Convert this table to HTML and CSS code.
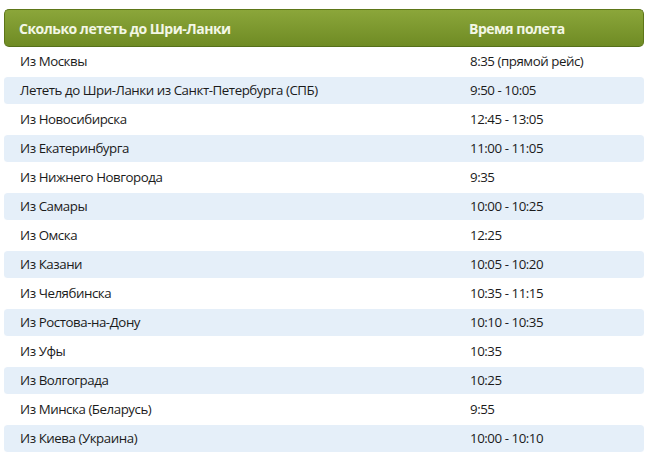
FILE: index.html
```
<!DOCTYPE html>
<html lang="ru">
<head>
<meta charset="utf-8">
<link rel="stylesheet" href="styles.css">
</head>
<body>
<table class="flights">
  <thead>
    <tr><th class="c1">Сколько лететь до Шри-Ланки</th><th class="c2">Время полета</th></tr>
  </thead>
  <tbody>
    <tr><td>Из Москвы</td><td>8:35 (прямой рейс)</td></tr>
    <tr class="alt"><td>Лететь до Шри-Ланки из Санкт-Петербурга (СПБ)</td><td>9:50 - 10:05</td></tr>
    <tr><td>Из Новосибирска</td><td>12:45 - 13:05</td></tr>
    <tr class="alt"><td>Из Екатеринбурга</td><td>11:00 - 11:05</td></tr>
    <tr><td>Из Нижнего Новгорода</td><td>9:35</td></tr>
    <tr class="alt"><td>Из Самары</td><td>10:00 - 10:25</td></tr>
    <tr><td>Из Омска</td><td>12:25</td></tr>
    <tr class="alt"><td>Из Казани</td><td>10:05 - 10:20</td></tr>
    <tr><td>Из Челябинска</td><td>10:35 - 11:15</td></tr>
    <tr class="alt"><td>Из Ростова-на-Дону</td><td>10:10 - 10:35</td></tr>
    <tr><td>Из Уфы</td><td>10:35</td></tr>
    <tr class="alt"><td>Из Волгограда</td><td>10:25</td></tr>
    <tr><td>Из Минска (Беларусь)</td><td>9:55</td></tr>
    <tr class="alt"><td>Из Киева (Украина)</td><td>10:00 - 10:10</td></tr>
  </tbody>
</table>
</body>
</html>
```
FILE: styles.css
```
html, body { margin: 0; padding: 0; background: #ffffff; }
body { padding: 9px 0 0 4px; font-family: "Open Sans", "Liberation Sans", sans-serif; }
.flights {
  width: 640px;
  border-collapse: separate;
  border-spacing: 0;
}
.flights th {
  height: 36px;
  padding: 0 0 0 14px;
  text-align: left;
  font-weight: 700;
  font-size: 14px;
  letter-spacing: -0.5px;
  color: #f3f7e6;
  background: linear-gradient(#8ba63a, #6f8b24);
  border-top: 1px solid #5d7618;
  border-bottom: 1px solid #55701a;
}
.flights th.c1 { border-left: 1px solid #5d7618; border-radius: 5px 0 0 5px; width: 436px; }
.flights th.c2 { border-right: 1px solid #5d7618; border-radius: 0 5px 5px 0; padding-left: 14px; }
.flights td {
  height: 27px;
  padding: 0 0 2px 16px;
  font-size: 13.3px;
  letter-spacing: -0.45px;
  color: #1b1b1b;
}
.flights td:last-child { padding-left: 15px; }
.flights tr.alt td { background: #e5eff9; border-top: 1px solid #fff; border-bottom: 1px solid #fff; height: 25px; }
.flights tr.alt td:first-child { border-radius: 4px 0 0 4px; }
.flights tr.alt td:last-child { border-radius: 0 4px 4px 0; }
```
